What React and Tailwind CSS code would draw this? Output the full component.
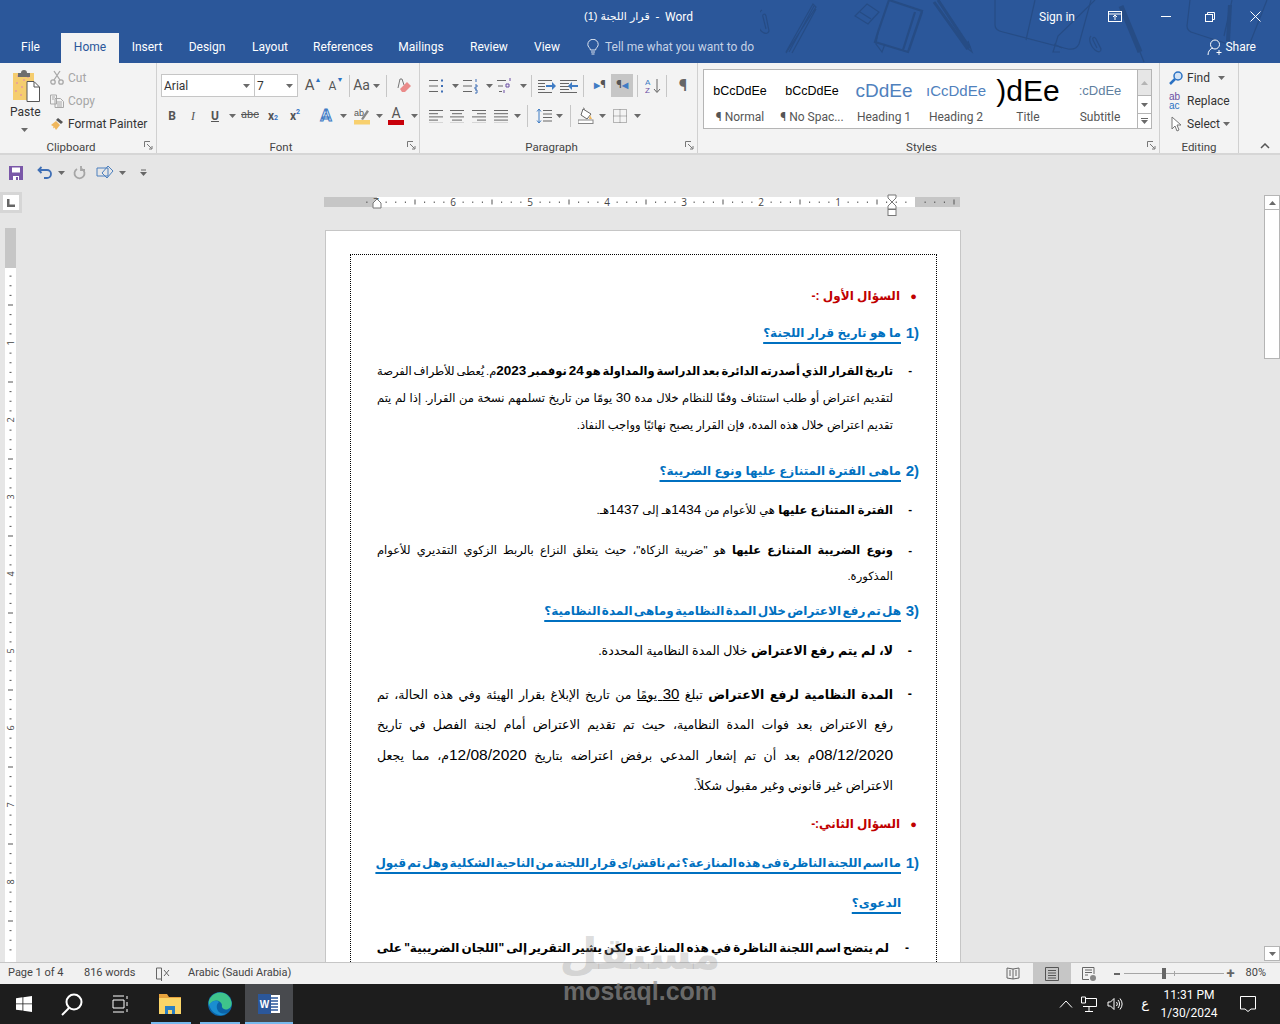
import React from 'react';

const UI = "font-['Roboto',sans-serif]";
const AR = "font-['Liberation_Sans','DejaVu_Sans',sans-serif]";

// ── Small shared drawings ───────────────────────────────────────────
const Chev = ({ className = '' }) => (
  <svg width="7" height="4" viewBox="0 0 7 4" className={className}><path d="M0 0h7L3.5 4z" fill="#6a6a6a" /></svg>
);
const Launcher = () => (
  <svg width="9" height="9" viewBox="0 0 9 9" className="absolute right-[3px] bottom-[3px]">
    <path d="M.5 6V.5H6M3 3l4.500 4.500M8 5v3H5" fill="none" stroke="#777" />
  </svg>
);
const Sep = ({ className = 'h-[22px]' }) => <div className={`w-px bg-[#c6c6c6] mx-[1px] ${className}`} />;

const Lines = ({ rows, stroke = '#666' }) => (
  <svg width="16" height="14" viewBox="0 0 16 14">
    {rows.map(([a, b], i) => <path key={i} d={`M${a} ${i * 3.2 + 1.5}H${b}`} stroke={stroke} />)}
  </svg>
);
const TitleDoodles = () => (
  <svg viewBox="0 0 520 63" className="absolute right-0 top-0 w-[520px] h-[63px]" fill="none" stroke="#264c85" strokeWidth="1.200">
    <path d="M2 10c-6 4-5 14-3 18s8 8 10 3l-3-15c-1-3-4-2-3 1l3 12" />
    <path d="M26 52L53 4l3 3-30 46M32 53L56 9M29 52L54 6" />
    <path d="M95 16l12-12 12 8-11 12zM100 12l11 7" />
    <path d="M118 32l11-32 33 11-14 41-33-10zM149 50l13-38M155 12l-12 38" strokeWidth="2.200" />
    <path d="M118 32l-2 12 6 8 3-8" />
    <path d="M178 0l31 47-2 1-33-46" strokeWidth="3" />
    <path d="M207 48l5 4-4-11" />
    <path d="M235 0v25c0 4 3 6 8 7l65 17c6 1 9-1 11-5l12-44M275 0l-9 40" />
    <path d="M300 52l-7 0 5-16 37-36M294 44l8 4" />
    <path d="M331 36c-3 3 0 11 4 14s6 2 6-1l-5-10c-2-3-4-1-3 1l4 8" />
    <path d="M361 6l19 46" strokeWidth="5" />
    <path d="M380 52l4 10" />
    <path d="M430 0l-3 26c0 4 3 6 7 7l46 15c5 1 8-1 10-5l17-43M472 0l-8 36" />
    <path d="M470 5l-2 36" strokeWidth="4" />
  </svg>
);

// ── Title bar + tabs ────────────────────────────────────────────────
function TitleBar() {
  return (
    <div className="relative h-[33px] flex items-center justify-between text-white text-[12px]">
      <div dir="ltr" className="pl-[584px] flex gap-[6px]">
        <span className={`${AR} text-[11px]`} dir="rtl">قرار اللجنة (1)</span>
        <span>-</span>
        <span>Word</span>
      </div>
      <div className="flex items-center pr-[19px] z-10">
        <span className="mr-[33px]">Sign in</span>
        <svg width="14" height="12" viewBox="0 0 14 12" className="mr-[39px]" fill="none" stroke="#fff">
          <rect x=".5" y=".5" width="13" height="10" /><path d="M.5 3h13M7 9V4M5 6l2-2 2 2" />
        </svg>
        <svg width="10" height="1" className="mr-[34px]"><rect width="10" height="1" fill="#fff" /></svg>
        <svg width="10" height="10" viewBox="0 0 10 10" className="mr-[35px]" fill="none" stroke="#fff">
          <rect x=".5" y="2.500" width="7" height="7" /><path d="M2.500 2V.5h7v7H8" />
        </svg>
        <svg width="11" height="11" viewBox="0 0 11 11" fill="none" stroke="#fff"><path d="M.5.500l10 10M10.500.500l-10 10" /></svg>
      </div>
    </div>
  );
}

function Tabs() {
  return (
    <div className="relative h-[30px] flex items-stretch text-white text-[12px] z-10">
      <div className="w-[61px] flex items-center justify-center pb-[2px]">File</div>
      <div className="w-[58px] flex items-center justify-center pb-[2px] bg-[#f3f3f3] text-[#2b579a]">Home</div>
      <div className="w-[56px] flex items-center justify-center pb-[2px]">Insert</div>
      <div className="w-[64px] flex items-center justify-center pb-[2px]">Design</div>
      <div className="w-[62px] flex items-center justify-center pb-[2px]">Layout</div>
      <div className="w-[84px] flex items-center justify-center pb-[2px]">References</div>
      <div className="w-[72px] flex items-center justify-center pb-[2px]">Mailings</div>
      <div className="w-[64px] flex items-center justify-center pb-[2px]">Review</div>
      <div className="w-[52px] flex items-center justify-center pb-[2px]">View</div>
      <div className="ml-[14px] flex items-center pb-[2px] text-[#c5d2e6]">
        <svg width="12" height="16" viewBox="0 0 12 16" fill="none" stroke="#dfe6f1" className="mr-[6px]">
          <path d="M3.500 11C3 8.500.8 8 .8 5.500a5.200 5.200 0 0110.400 0C11.200 8 9 8.500 8.500 11zM4 13h4M4.500 15h3" />
        </svg>
        <span>Tell me what you want to do</span>
      </div>
      <div className="ml-auto mr-[24px] flex items-center pb-[2px] gap-[1px]">
        <svg width="17" height="17" viewBox="0 0 17 17" fill="none" stroke="#fff">
          <circle cx="8" cy="5.500" r="4.500" /><path d="M1 16c0-4 2.500-6.500 5-7M12 11v5M9.500 13.500h5" />
        </svg>
        <span>Share</span>
      </div>
    </div>
  );
}

// ── Ribbon ──────────────────────────────────────────────────────────
const Group = ({ label, className, children, launcher = true }) => (
  <div className={`relative h-[90px] border-r border-[#d0d0d0] shrink-0 ${className}`}>
    {children}
    <div className={`absolute left-0 right-0 bottom-[-3px] text-center text-[11.5px] text-[#444] ${launcher ? 'pr-[14px]' : ''}`}>{label}</div>
    {launcher && <Launcher />}
  </div>
);

function Clipboard() {
  return (
    <Group label="Clipboard" className="w-[157px] flex">
      <div className="w-[48px] pl-[11px] pt-[5px] flex flex-col">
        <svg width="30" height="34" viewBox="0 0 30 34">
          <rect x="2" y="5" width="21" height="27" fill="#f5cd6f" />
          <path d="M6 8h2M12 12h2M5 15h2M10 19h2M4 23h2M9 27h2M16 9h2" stroke="#e69aa0" strokeWidth="1.500" />
          <path d="M7 9V5h3a3 3 0 016 0h3v4z" fill="#6e6e6e" />
          <path d="M16 13.500h7l5.500 5.500V33.500H16z" fill="#fff" stroke="#555" /><path d="M23 14v5h5" fill="none" stroke="#555" />
        </svg>
        <span className="text-[12px] text-[#333] -ml-[1px] mt-[1px]">Paste</span>
        <Chev className="ml-[10px] mt-[7px]" />
      </div>
      <div className="flex flex-col text-[12px] pt-[3px] ml-[2px]">
        <div className="h-[23px] flex items-center gap-[4px] text-[#a6a6a6]">
          <svg width="14" height="15" viewBox="0 0 14 15" fill="none" stroke="#a8a8a8" strokeWidth="1.300">
            <circle cx="3" cy="12" r="2.200" /><circle cx="11" cy="12" r="2.200" /><path d="M4 10L10 1M10 10L4 1" />
          </svg>
          <span>Cut</span>
        </div>
        <div className="h-[23px] flex items-center gap-[4px] text-[#a6a6a6]">
          <svg width="14" height="14" viewBox="0 0 14 14" fill="none" stroke="#a8a8a8">
            <path d="M.5 1h6v9h-6zM5 4.500h5.500l3 3v6H5zM7 8h5M7 10h5M7 12h5M2 3h3M2 5h2" />
          </svg>
          <span>Copy</span>
        </div>
        <div className="h-[23px] flex items-center gap-[4px] text-[#333]">
          <svg width="14" height="14" viewBox="0 0 14 14">
            <path d="M8 1l5 4-2 2-5-4z" fill="#555" /><path d="M1 8l5-4 4 4-4 5-1.500-2.500L3 11.500l.5-2z" fill="#f0b75c" />
          </svg>
          <span>Format Painter</span>
        </div>
      </div>
    </Group>
  );
}

const Tool = ({ className = '', children }) => (
  <div className={`h-[23px] flex items-center justify-center shrink-0 ${className}`}>{children}</div>
);

function FontGroup() {
  return (
    <Group label="Font" className="w-[263px] pl-[4px]">
      <div className="flex items-center h-[23px] mt-[11px]">
        <div className="w-[94px] h-[23px] bg-white border border-[#c6c6c6] flex items-center justify-between pl-[2px] pr-[4px] text-[12px] text-[#333]">
          <span>Arial</span><Chev />
        </div>
        <div className="w-[43px] h-[23px] bg-white border border-l-0 border-[#c6c6c6] flex items-center justify-between pl-[2px] pr-[4px] text-[12px] text-[#333]">
          <span>7</span><Chev />
        </div>
        <Tool className="w-[24px] ml-[3px] text-[15px] text-[#555]">A<span className="text-[7px] text-[#2b72c4] -mt-[10px]">▲</span></Tool>
        <Tool className="w-[20px] ml-[1px] text-[12px] text-[#555]">A<span className="text-[7px] text-[#2b72c4] -mt-[10px]">▼</span></Tool>
        <Sep className="h-[22px] ml-[3px]" />
        <Tool className="w-[31px] text-[14px] text-[#555] gap-[3px]">Aa<Chev /></Tool>
        <Sep className="h-[22px] ml-[4px]" />
        <Tool className="w-[26px] ml-[3px]">
          <svg width="16" height="16" viewBox="0 0 16 16">
            <path d="M2 10L4 1h2l2 6" fill="none" stroke="#777" /><path d="M4 11l7-7 4 4-6 6H6z" fill="#ea8b8a" />
          </svg>
        </Tool>
      </div>
      <div className="flex items-center h-[23px] mt-[7px] text-[#555]">
        <Tool className="w-[20px] ml-[1px] font-bold text-[12px]">B</Tool>
        <Tool className="w-[22px] italic text-[12px] font-['Liberation_Serif',serif]">I</Tool>
        <Tool className="w-[22px] underline font-bold text-[12px]">U</Tool>
        <Tool className="w-[12px]"><Chev /></Tool>
        <Tool className="w-[24px] line-through text-[11px]">abc</Tool>
        <Tool className="w-[22px] font-bold text-[12px]">x<span className="text-[7px] text-[#2b72c4] mt-[6px]">2</span></Tool>
        <Tool className="w-[22px] font-bold text-[12px]">x<span className="text-[7px] text-[#2b72c4] -mt-[6px]">2</span></Tool>
        <Sep className="h-[22px] ml-[4px]" />
        <Tool className="w-[24px] ml-[3px] text-[17px] font-bold text-[#d9e7f7] [-webkit-text-stroke:1px_#3f7cc4]">A</Tool>
        <Tool className="w-[10px]"><Chev /></Tool>
        <Tool className="w-[24px] ml-[2px] flex-col">
          <svg width="16" height="18" viewBox="0 0 16 18">
            <text x="0" y="9" fontSize="9" fill="#555" fontFamily="Liberation Sans">ab</text>
            <path d="M7 12l6-9 2 1.500L9 13z" fill="#888" />
            <rect y="13" width="16" height="4.500" fill="#f8d06e" />
          </svg>
        </Tool>
        <Tool className="w-[10px]"><Chev /></Tool>
        <Tool className="w-[24px] flex-col">
          <span className="text-[14px] leading-[13px] text-[#555]">A</span>
          <span className="w-[16px] h-[5px] bg-[#c8000a]" />
        </Tool>
        <Tool className="w-[12px]"><Chev /></Tool>
      </div>
    </Group>
  );
}

const ListIcon = ({ kind }) => (
  <svg width="18" height="16" viewBox="0 0 18 16" fill="none" stroke="#666">
    <path d={kind === 'multi' ? 'M0 2.500h9M1 8h5M2 13.500h3' : 'M0 2.500h9M0 8h9M0 13.500h9'} />
    {kind === 'dot' && <path d="M12 2.500h2M12 8h2M12 13.500h2" stroke="#3f6fb5" strokeWidth="2.200" />}
    {kind === 'num' && <path d="M13 1v3M12 7h2v2h-2v2h2M12 12h2v3h-2" stroke="#3f6fb5" />}
    {kind === 'multi' && <path d="M13 0v3M9 6h3v3H9zM7 12v3" stroke="#6b4fa3" />}
  </svg>
);

function Paragraph() {
  return (
    <Group label="Paragraph" className="w-[278px] pl-[8px]">
      <div className="flex items-center h-[23px] mt-[11px]">
        <Tool className="w-[20px]"><ListIcon kind="dot" /></Tool>
        <Tool className="w-[14px]"><Chev /></Tool>
        <Tool className="w-[20px]"><ListIcon kind="num" /></Tool>
        <Tool className="w-[14px]"><Chev /></Tool>
        <Tool className="w-[20px]"><ListIcon kind="multi" /></Tool>
        <Tool className="w-[14px]"><Chev /></Tool>
        <Sep className="h-[22px]" />
        <Tool className="w-[22px] ml-[3px]">
          <svg width="18" height="14" viewBox="0 0 18 14" fill="none" stroke="#666"><path d="M0 1.500h14M0 4.500h7M0 7.500h7M0 10.500h7M0 13.500h14" /><path d="M8 6h6V3l4 4-4 4V8H8z" fill="#3f7cc4" stroke="none" /></svg>
        </Tool>
        <Tool className="w-[22px]">
          <svg width="18" height="14" viewBox="0 0 18 14" fill="none" stroke="#666"><path d="M0 1.500h17M0 4.500h9M0 7.500h9M0 10.500h9M0 13.500h17" /><path d="M18 6h-6V3L8 7l4 4V8h6z" fill="#3f7cc4" stroke="none" /></svg>
        </Tool>
        <Sep className="h-[22px] ml-[3px] mr-[5px]" />
        <Tool className="w-[22px] text-[#555] font-bold text-[11px]"><span className="text-[#3f7cc4] text-[8px]">▶</span>¶</Tool>
        <Tool className="w-[22px] bg-[#c6c6c6] text-[#555] font-bold text-[11px]">¶<span className="text-[#3f7cc4] text-[8px]">◀</span></Tool>
        <Sep className="h-[22px] ml-[4px] mr-[5px]" />
        <Tool className="w-[20px]">
          <svg width="16" height="16" viewBox="0 0 16 16">
            <text x="0" y="7" fontSize="8" fill="#3f7cc4" fontFamily="Liberation Sans">A</text>
            <text x="0" y="15" fontSize="8" fill="#6b4fa3" fontFamily="Liberation Sans">Z</text>
            <path d="M12 1v13M9 11l3 3.500 3-3.500" fill="none" stroke="#666" />
          </svg>
        </Tool>
        <Sep className="h-[22px] ml-[3px] mr-[7px]" />
        <Tool className="w-[18px] text-[17px] text-[#666] font-bold">¶</Tool>
      </div>
      <div className="flex items-center h-[23px] mt-[7px]">
        <Tool className="w-[20px] ml-[-2px]"><Lines rows={[[1, 15], [1, 10], [1, 15], [1, 10], [1, 15]]} /></Tool>
        <Tool className="w-[22px]"><Lines rows={[[1, 15], [3, 13], [1, 15], [3, 13], [1, 15]]} /></Tool>
        <Tool className="w-[22px]"><Lines rows={[[1, 15], [6, 15], [1, 15], [6, 15], [1, 15]]} /></Tool>
        <Tool className="w-[22px]"><Lines rows={[[1, 15], [1, 15], [1, 15], [1, 15], [1, 15]]} /></Tool>
        <Tool className="w-[10px]"><Chev /></Tool>
        <Sep className="h-[22px] ml-[5px] mr-[6px]" />
        <Tool className="w-[20px]">
          <svg width="16" height="16" viewBox="0 0 16 16" fill="none"><path d="M7 2.500h9M7 6h9M7 9.500h9M7 13h9" stroke="#666" /><path d="M3 1v14M1 3.500L3 1l2 2.500M1 12.500L3 15l2-2.500" stroke="#3f7cc4" /></svg>
        </Tool>
        <Tool className="w-[10px]"><Chev /></Tool>
        <Sep className="h-[22px] ml-[6px] mr-[5px]" />
        <Tool className="w-[20px]">
          <svg width="16" height="17" viewBox="0 0 16 17"><path d="M5 2l8 5-4 5-6-4z" fill="#fff" stroke="#666" /><path d="M5 0l2 2-1 1z" fill="#666" /><path d="M12 8l2 4h-3z" fill="#f0b75c" /><rect y="13" width="15" height="3.500" fill="#fff" stroke="#888" /></svg>
        </Tool>
        <Tool className="w-[12px]"><Chev /></Tool>
        <Tool className="w-[20px] ml-[2px]">
          <svg width="14" height="14" viewBox="0 0 14 14" fill="none" stroke="#777" strokeDasharray="1 1"><path d="M.5.500h13v13H.5zM.5 7h13M7 .500v13" /></svg>
        </Tool>
        <Tool className="w-[12px] ml-[1px]"><Chev /></Tool>
      </div>
    </Group>
  );
}

const StyleCell = ({ preview, name }) => (
  <div className="w-[72px] h-[58px] flex flex-col shrink-0 overflow-hidden">
    <div className="h-[38px] mt-[2px] flex items-center justify-center whitespace-nowrap overflow-hidden">{preview}</div>
    <div className="text-[12px] text-[#555] text-center whitespace-nowrap -mt-[2px]">{name}</div>
  </div>
);

function Styles() {
  return (
    <Group label="Styles" className="w-[462px] pl-[5px]">
      <div className="flex h-[60px] mt-[6px]">
        <div className="w-[435px] bg-white border border-[#b5b5b5] flex">
          <StyleCell preview={<span className={`${AR} text-[12.500px] text-black`}>bCcDdEe</span>} name="¶ Normal" />
          <StyleCell preview={<span className={`${AR} text-[12.500px] text-black`}>bCcDdEe</span>} name="¶ No Spac..." />
          <StyleCell preview={<span className="font-['Liberation_Sans',sans-serif] text-[19px] text-[#4f81bd]">cDdEe</span>} name="Heading 1" />
          <StyleCell preview={<span className="font-['Liberation_Sans',sans-serif] text-[15px] text-[#4f81bd]">ıCcDdEe</span>} name="Heading 2" />
          <StyleCell preview={<span className="font-['Liberation_Sans',sans-serif] text-[30px] leading-none text-black">)dEe</span>} name="Title" />
          <StyleCell preview={<span className="font-['Liberation_Sans',sans-serif] text-[13px] text-[#5f7f9f]">:cDdEe</span>} name="Subtitle" />
        </div>
        <div className="w-[14px] border border-l-0 border-[#b5b5b5] flex flex-col">
          <div className="h-[25px] bg-[#e6e6e6] flex items-center justify-center"><Chev className="rotate-180 opacity-40" /></div>
          <div className="h-[19px] bg-white border-y border-[#b5b5b5] flex items-center justify-center"><Chev /></div>
          <div className="flex-1 bg-white flex flex-col items-center justify-center gap-[1px]"><span className="w-[7px] h-px bg-[#666]" /><Chev /></div>
        </div>
      </div>
    </Group>
  );
}

function Editing() {
  return (
    <Group label="Editing" launcher={false} className="w-[79px] pl-[9px]">
      <div className="flex flex-col text-[12px] text-[#333] pt-[3px]">
        <div className="h-[23px] flex items-center gap-[4px]">
          <svg width="14" height="14" viewBox="0 0 14 14"><circle cx="9" cy="5" r="4" fill="#d3e3f5" stroke="#2b72c4" strokeWidth="1.500" /><path d="M6 8l-5 5" stroke="#2b72c4" strokeWidth="2.500" /></svg>
          <span>Find</span><Chev className="ml-[4px]" />
        </div>
        <div className="h-[23px] flex items-center gap-[1px]">
          <div className="w-[17px] text-[10px] leading-[9px] font-['Liberation_Sans',sans-serif]"><div className="text-[#6b4fa3]">ab</div><div className="text-[#2b72c4]">ac</div></div>
          <span>Replace</span>
        </div>
        <div className="h-[23px] flex items-center gap-[3px]">
          <svg width="14" height="16" viewBox="0 0 14 16" className="ml-[1px]" fill="#fff" stroke="#777"><path d="M2 1v12l3-3 2 5 2-1-2-5h4z" /></svg>
          <span>Select</span><Chev />
        </div>
      </div>
    </Group>
  );
}

function Ribbon() {
  return (
    <div className="h-[92px] bg-[#f3f3f3] border-b-2 border-[#d6d6d6] flex items-start relative">
      <Clipboard />
      <FontGroup />
      <Paragraph />
      <Styles />
      <Editing />
      <svg width="10" height="6" viewBox="0 0 10 6" fill="none" stroke="#555" strokeWidth="1.500" className="absolute right-[10px] bottom-[4px]"><path d="M1 5l4-4 4 4" /></svg>
    </div>
  );
}

function QuickAccess() {
  return (
    <div className="h-[35px] bg-[#e6e6e6] flex items-center pl-[9px]">
      <svg width="14" height="14" viewBox="0 0 14 14"><path d="M0 0h14v14H0z" fill="#7a57a8" /><path d="M3 1.500h8v5H3z" fill="#fff" /><path d="M4 10h6v4H4z" fill="#fff" /><path d="M7 11h2v3H7z" fill="#7a57a8" /></svg>
      <svg width="16" height="14" viewBox="0 0 16 14" fill="none" className="ml-[14px]" stroke="#3f6fb5" strokeWidth="1.800"><path d="M1 4h9a4 4 0 010 8H7M4.500 1L1.500 4l3 3" /></svg>
      <Chev className="ml-[5px]" />
      <svg width="14" height="14" viewBox="0 0 14 14" fill="none" className="ml-[8px]" stroke="#a6a6a6" strokeWidth="1.800"><path d="M9 3a5 5 0 11-5 0M8 0v4h4" /></svg>
      <svg width="18" height="16" viewBox="0 0 18 16" fill="none" stroke="#4b7fbe" className="ml-[9px]"><path d="M1 3h11v8H1zM12 1l5 5-6 7-5-5z" /></svg>
      <Chev className="ml-[5px]" />
      <svg width="7" height="7" viewBox="0 0 7 7" className="ml-[14px]"><path d="M1 1h5" stroke="#666" /><path d="M0 3h7L3.500 7z" fill="#666" /></svg>
    </div>
  );
}

// ── Rulers ──────────────────────────────────────────────────────────
const hTicks = Array.from({ length: 62 }, (_, i) => i - 4);
const vTicks = Array.from({ length: 71 }, (_, i) => i + 1);

function HRuler() {
  return (
    <svg width="636" height="22" viewBox="0 0 636 22" className="ml-[302px] mt-[4px] shrink-0 overflow-visible">
      <rect y="3" width="53" height="10" fill="#c6c6c6" />
      <rect x="53" y="3" width="538" height="10" fill="#fff" />
      <rect x="591" y="3" width="45" height="10" fill="#c6c6c6" />
      {hTicks.map((i) => {
        const x = 591 - i * 9.625;
        if (x < 2 || x > 634 || i === 0) return null;
        if (i % 8 === 0) return <text key={i} x={x} y="12" fontSize="10" fill="#444" textAnchor="middle" fontFamily="Open Sans">{i / 8}</text>;
        return i % 4 === 0
          ? <rect key={i} x={x} y="5.500" width="1" height="5" fill="#555" />
          : <rect key={i} x={x} y="7.500" width="1" height="1.500" fill="#555" />;
      })}
      <path d="M49 14V9l4-4 4 4v5z" fill="#fff" stroke="#777" />
      <path d="M564 1h8v3l-4 4-4-4zM564 15V12l4-4 4 4v3z" fill="#fff" stroke="#777" />
      <rect x="564" y="15.500" width="8" height="6" fill="#fff" stroke="#777" />
    </svg>
  );
}

function VRuler() {
  return (
    <svg width="12" height="734" viewBox="0 0 12 734" className="ml-[5px] mt-[15px] shrink-0">
      <rect width="11" height="40" fill="#c6c6c6" />
      <rect y="40" width="11" height="694" fill="#fff" />
      {vTicks.map((i) => {
        const y = 38 + i * 9.625;
        if (i % 8 === 0) return <text key={i} fontSize="9" fill="#444" textAnchor="middle" fontFamily="Open Sans" transform={`translate(8.500 ${y}) rotate(-90)`}>{i / 8}</text>;
        return i % 4 === 0
          ? <rect key={i} x="3" y={y} width="5" height="1" fill="#555" />
          : <rect key={i} x="4.500" y={y} width="2" height="1" fill="#555" />;
      })}
    </svg>
  );
}

function Scrollbar() {
  return (
    <div className="w-[16px] shrink-0 flex flex-col pt-[5px] pb-[1px]">
      <div className="h-[15px] bg-white border border-[#b5b5b5] flex items-center justify-center"><Chev className="rotate-180" /></div>
      <div className="h-[149px] bg-white border-x border-b border-[#b5b5b5]" />
      <div className="flex-1 bg-[#e6e6e6]" />
      <div className="h-[15px] bg-white border border-[#b5b5b5] flex items-center justify-center"><Chev /></div>
    </div>
  );
}

// ── Document ────────────────────────────────────────────────────────
const N = ({ className = 'text-[13.500px]', children }) => <span className={className}>{children}</span>;

const RedQ = ({ className, children }) => (
  <div className={`h-6 flex items-center text-[12px] font-bold text-[#c00000] ${className}`}>
    <span className="w-[19px] shrink-0 text-[11px] pr-[2px]">●</span>
    <span>{children}</span>
  </div>
);
const Ask = ({ num, className, textClass = '', children }) => (
  <div className={`h-6 flex items-center text-[#0070c0] text-[12px] font-bold ${className}`}>
    <span dir="ltr" className="w-[18px] shrink-0 text-right text-[15px]">{num && `${num})`}</span>
    <span className={`underline underline-offset-[5px] decoration-2 decoration-[#0070c0] [text-decoration-skip-ink:none] whitespace-nowrap ${textClass}`}>{children}</span>
  </div>
);
const Li = ({ dash = true, full = false, size = 'text-[11.500px]', marker = 'w-[26px] pr-[7px]', className, children }) => (
  <div className={`h-6 flex items-center text-black ${size} ${className}`}>
    <span className={`shrink-0 font-bold ${marker}`}>{dash ? '-' : ''}</span>
    <span className={`flex-1 whitespace-nowrap ${full ? 'text-justify [text-align-last:justify]' : ''}`}>{children}</span>
  </div>
);

function Page() {
  return (
    <div className="ml-[303px] mt-[14px] w-[636px] h-[900px] shrink-0 bg-white border border-[#c6c6c6] pt-[23px] px-[24px]">
      <div dir="rtl" className={`${AR} w-[587px] h-[800px] border border-dotted border-black pt-[29px] pr-[17px] pl-[26px]`}>
        <RedQ>السؤال الأول :-</RedQ>
        <Ask num="1" className="mt-[13px]">ما هو تاريخ قرار اللجنة؟</Ask>
        <Li full className="mt-[14px] [word-spacing:-1.400px]"><b>تاريخ القرار الذي أصدرته الدائرة بعد الدراسة والمداولة هو <N>24</N> نوفمبر <N>2023</N></b>م. يُعطى للأطراف الفرصة</Li>
        <Li full dash={false} className="mt-[3px]">لتقديم اعتراض أو طلب استئناف وفقًا للنظام خلال مدة <N>30</N> يومًا من تاريخ تسلمهم نسخة من القرار. إذا لم يتم</Li>
        <Li dash={false} className="mt-[4px]">تقديم اعتراض خلال هذه المدة، فإن القرار يصبح نهائيًا وواجب النفاذ.</Li>
        <Ask num="2" className="mt-[21px]">ماهى الفترة المتنازع عليها ونوع الضريبة؟</Ask>
        <Li className="mt-[15px]"><b>الفترة المتنازع عليها</b> هي للأعوام من <N>1434</N>هـ إلى <N>1437</N>هـ.</Li>
        <Li full className="mt-[17px]"><b>ونوع الضريبة المتنازع عليها</b> هو "ضريبة الزكاة"، حيث يتعلق النزاع بالربط الزكوي التقديري للأعوام</Li>
        <Li dash={false} className="mt-[2px]">المذكورة.</Li>
        <Ask num="3" className="mt-[10px]" textClass="[word-spacing:-2px]">هل تم رفع الاعتراض خلال المدة النظامية وماهى المدة النظامية؟</Ask>
        <Li className="mt-[16px]" size="text-[12.500px]"><b>لا، لم يتم رفع الاعتراض</b> خلال المدة النظامية المحددة.</Li>
        <Li full className="mt-[19px]" size="text-[12.500px]"><b>المدة النظامية لرفع الاعتراض</b> تبلغ <u><N className="text-[15px]">30</N> يومًا</u> من تاريخ الإبلاغ بقرار الهيئة وفي هذه الحالة، تم</Li>
        <Li full dash={false} className="mt-[7px]" size="text-[12.500px]">رفع الاعتراض بعد فوات المدة النظامية، حيث تم تقديم الاعتراض أمام لجنة الفصل في تاريخ</Li>
        <Li full dash={false} className="mt-[6px]" size="text-[12.500px]"><N className="text-[15.500px]">08/12/2020</N>م بعد أن تم إشعار المدعي برفض اعتراضه بتاريخ <N className="text-[15.500px]">12/08/2020</N>م، مما يجعل</Li>
        <Li dash={false} className="mt-[7px]" size="text-[12.500px]">الاعتراض غير قانوني وغير مقبول شكلاً.</Li>
        <RedQ className="mt-[14px]">السؤال الثاني:-</RedQ>
        <Ask num="1" className="mt-[15px]" textClass="[word-spacing:-2.300px]">ما اسم اللجنة الناظرة فى هذه المنازعة؟ ثم ناقش/ى قرار اللجنة من الناحية الشكلية وهل تم قبول</Ask>
        <Ask className="mt-[16px]">الدعوى؟</Ask>
        <Li full marker="w-[30px] pr-[10px]" className="mt-[21px] font-bold [word-spacing:-1.200px]" size="text-[12px]">لم يتضح اسم اللجنة الناظرة في هذه المنازعة ولكن يشير التقرير إلى "اللجان الضريبية" على</Li>
      </div>
    </div>
  );
}

// ── Status bar + taskbar ────────────────────────────────────────────
function StatusBar() {
  return (
    <div className="relative h-[22px] bg-[#f1f1f1] border-t border-[#c6c6c6] flex items-center text-[11px] text-[#444] pl-[8px]">
      <span className="w-[76px]">Page 1 of 4</span>
      <span className="w-[72px]">816 words</span>
      <svg width="14" height="14" viewBox="0 0 14 14" fill="none" stroke="#666" className="mr-[18px]"><path d="M.5 1h5v11h-5zM5.500 1v13M8 3l5 6M13 3L8 9" /></svg>
      <span>Arabic (Saudi Arabia)</span>
      <div className="ml-auto flex items-center h-[21px]">
        <svg width="14" height="14" viewBox="0 0 14 14" fill="none" stroke="#666" className="mr-[13px]"><path d="M7 2L1 1v10l6 1 6-1V1zM7 2v10M3 4h2M3 6h2M3 8h2M9 4h2M9 6h2M9 8h2" /></svg>
        <div className="w-[38px] h-full bg-[#c6c6c6] flex items-center justify-center">
          <svg width="14" height="14" viewBox="0 0 14 14" fill="none" stroke="#555"><path d="M.5.500h13v13H.5zM3 3.500h8M3 6h8M3 8.500h8M3 11h8" /></svg>
        </div>
        <svg width="14" height="14" viewBox="0 0 14 14" fill="none" stroke="#666" className="ml-[11px]"><path d="M12 7V.5H.5v12H7M3 3h7M3 5.500h7M3 8h3" /><circle cx="11" cy="11" r="3" fill="#888" stroke="none" /></svg>
        <span className="ml-[18px] w-[6px] h-[2px] bg-[#666]" />
        <div className="relative w-[100px] h-px bg-[#a6a6a6] ml-[4px]">
          <span className="absolute left-[38px] top-[-5px] w-[4px] h-[11px] bg-[#666]" />
          <span className="absolute left-[50px] top-[-2px] w-px h-[5px] bg-[#a6a6a6]" />
        </div>
        <span className="w-[14px] text-center text-[15px] leading-none font-bold text-[#666] mr-[8px]">+</span>
        <span className="mr-[14px]">80%</span>
      </div>
    </div>
  );
}

const TaskItem = ({ active, bar = '', className = '', children }) => (
  <div className={`relative w-[48px] h-full flex items-center justify-center shrink-0 ${active ? 'bg-[#484a4e]' : ''} ${className}`}>
    {children}
    {bar && <span className={`absolute bottom-0 h-[2px] bg-[#76b9ed] ${bar}`} />}
  </div>
);

function Taskbar() {
  return (
    <div className="h-[40px] bg-[#1d1d1d] flex items-center text-white">
      <TaskItem>
        <svg width="16" height="16" viewBox="0 0 16 16" fill="#fff"><path d="M0 2.200l6.500-.9V7.500H0zM7.300 1.200L16 0v7.500H7.300zM0 8.300h6.500v6.300L0 13.800zM7.300 8.300H16V16l-8.700-1.200z" /></svg>
      </TaskItem>
      <TaskItem>
        <svg width="24" height="24" viewBox="0 0 24 24" fill="none" stroke="#fff" strokeWidth="2"><circle cx="14" cy="10" r="7.500" /><path d="M9 16l-7 7" /></svg>
      </TaskItem>
      <TaskItem>
        <svg width="16" height="18" viewBox="0 0 16 18" fill="none" stroke="#fff"><path d="M1 1h11M1 17h11M1 5h11v8H1zM15 1v3M15 7v4M15 14v3" /></svg>
      </TaskItem>
      <TaskItem className="ml-[2px]" bar="left-[5px] right-[3px]">
        <svg width="22" height="22" viewBox="0 0 22 22"><path d="M0 1h8l2 3h12v4H0z" fill="#e8a33d" /><path d="M0 5h22v16H0z" fill="#fbd568" /><path d="M6 13h10v8h-3v-4H9v4H6z" fill="#2a7fc4" /></svg>
      </TaskItem>
      <TaskItem className="ml-[2px]" bar="left-[4px] right-[4px]">
        <svg width="24" height="24" viewBox="0 0 24 24">
          <circle cx="12" cy="12" r="12" fill="#0b63a8" />
          <path d="M3 5C8-2 21-1 23.500 10c1 5-3 8-6 7.500-3-.5-4-2.500-3.500-4.500C13 9 9 7.500 5.500 9 3.500 10 2 12 1 14 .2 10 1 7 3 5z" fill="#3fc48b" />
          <path d="M1 13c3-5 8-5 10-3-3 2-3 7 0 10 3 2 7 2 9 0-4 5-15 5-19-7z" fill="#1a8ed0" />
        </svg>
      </TaskItem>
      <TaskItem active className="ml-[1px]" bar="left-0 right-0">
        <svg width="22" height="22" viewBox="0 0 22 22">
          <rect x="7" y="2" width="15" height="18" fill="#fff" />
          <path d="M12 5h8M12 8h8M12 11h8M12 14h8M12 17h8" stroke="#2b579a" strokeWidth="1.500" />
          <rect y="1" width="13" height="20" fill="#2b579a" />
          <text x="6.500" y="15" fontSize="10" fontWeight="700" fill="#fff" textAnchor="middle" fontFamily="Liberation Sans">W</text>
        </svg>
      </TaskItem>
      <div className="ml-auto flex items-center h-full">
        <svg width="14" height="8" viewBox="0 0 14 8" fill="none" stroke="#fff" className="mr-[8px]"><path d="M1 7.500l6-6.500 6 6.500" /></svg>
        <svg width="16" height="16" viewBox="0 0 16 16" fill="none" stroke="#fff" className="mr-[10px]"><path d="M.5 1h4v6h-4zM4.500 2.500h11v8H2M8 10.500V15M4 15.500h8" /></svg>
        <svg width="16" height="14" viewBox="0 0 16 14" fill="none" stroke="#fff" className="mr-[18px]"><path d="M1 5h2.500L7 1.500v11L3.500 9H1zM9.500 5a3 3 0 010 4M11 3a6 6 0 010 8M13 1.500a9 9 0 010 11" /></svg>
        <span className={`${AR} text-[13px] mr-[7px]`}>ع</span>
        <div className="w-[66px] text-center text-[12px] leading-[18px] mr-[18px]">
          <div>11:31 PM</div>
          <div>1/30/2024</div>
        </div>
        <svg width="16" height="16" viewBox="0 0 16 16" fill="none" stroke="#fff" className="mr-[24px]"><path d="M.5.500h15V13H11l-3 2.500L5 13H.5z" /></svg>
      </div>
    </div>
  );
}

export default function App() {
  return (
    <div className={`${UI} relative w-[1280px] h-[1024px] overflow-hidden flex flex-col bg-[#e6e6e6]`}>
      {/* ── Blue header ── */}
      <div className="relative bg-[#2b579a]">
        <TitleDoodles />
        <TitleBar />
        <Tabs />
      </div>
      <Ribbon />
      <QuickAccess />

      {/* ── Editor ── */}
      <div className="flex-1 min-h-0 flex overflow-hidden">
        <div className="w-[22px] shrink-0 flex flex-col">
          <div className="mt-[2px] w-[22px] h-[21px] bg-[#d6d6d6] p-[3px] shrink-0">
            <div className="w-full h-full bg-white flex items-center justify-center">
              <svg width="8" height="8" viewBox="0 0 8 8"><path d="M0 0h2.500v5.500H8V8H0z" fill="#666" /></svg>
            </div>
          </div>
          <VRuler />
        </div>
        <div className="flex-1 min-w-0 flex flex-col overflow-hidden">
          <HRuler />
          <Page />
        </div>
        <Scrollbar />
      </div>

      <StatusBar />
      <Taskbar />

      {/* ── Site watermark over the screenshot ── */}
      <div className="absolute left-[540px] top-[929px] w-[200px] flex flex-col items-center pointer-events-none">
        <span dir="rtl" className="font-['DejaVu_Sans',sans-serif] font-bold text-[44px] leading-[50px] text-[#8c8c8c]/30">مستقل</span>
        <span className="font-['Liberation_Sans',sans-serif] font-bold text-[25px] leading-[24px] text-[#8c8c8c]/70">mostaql.com</span>
      </div>
    </div>
  );
}
